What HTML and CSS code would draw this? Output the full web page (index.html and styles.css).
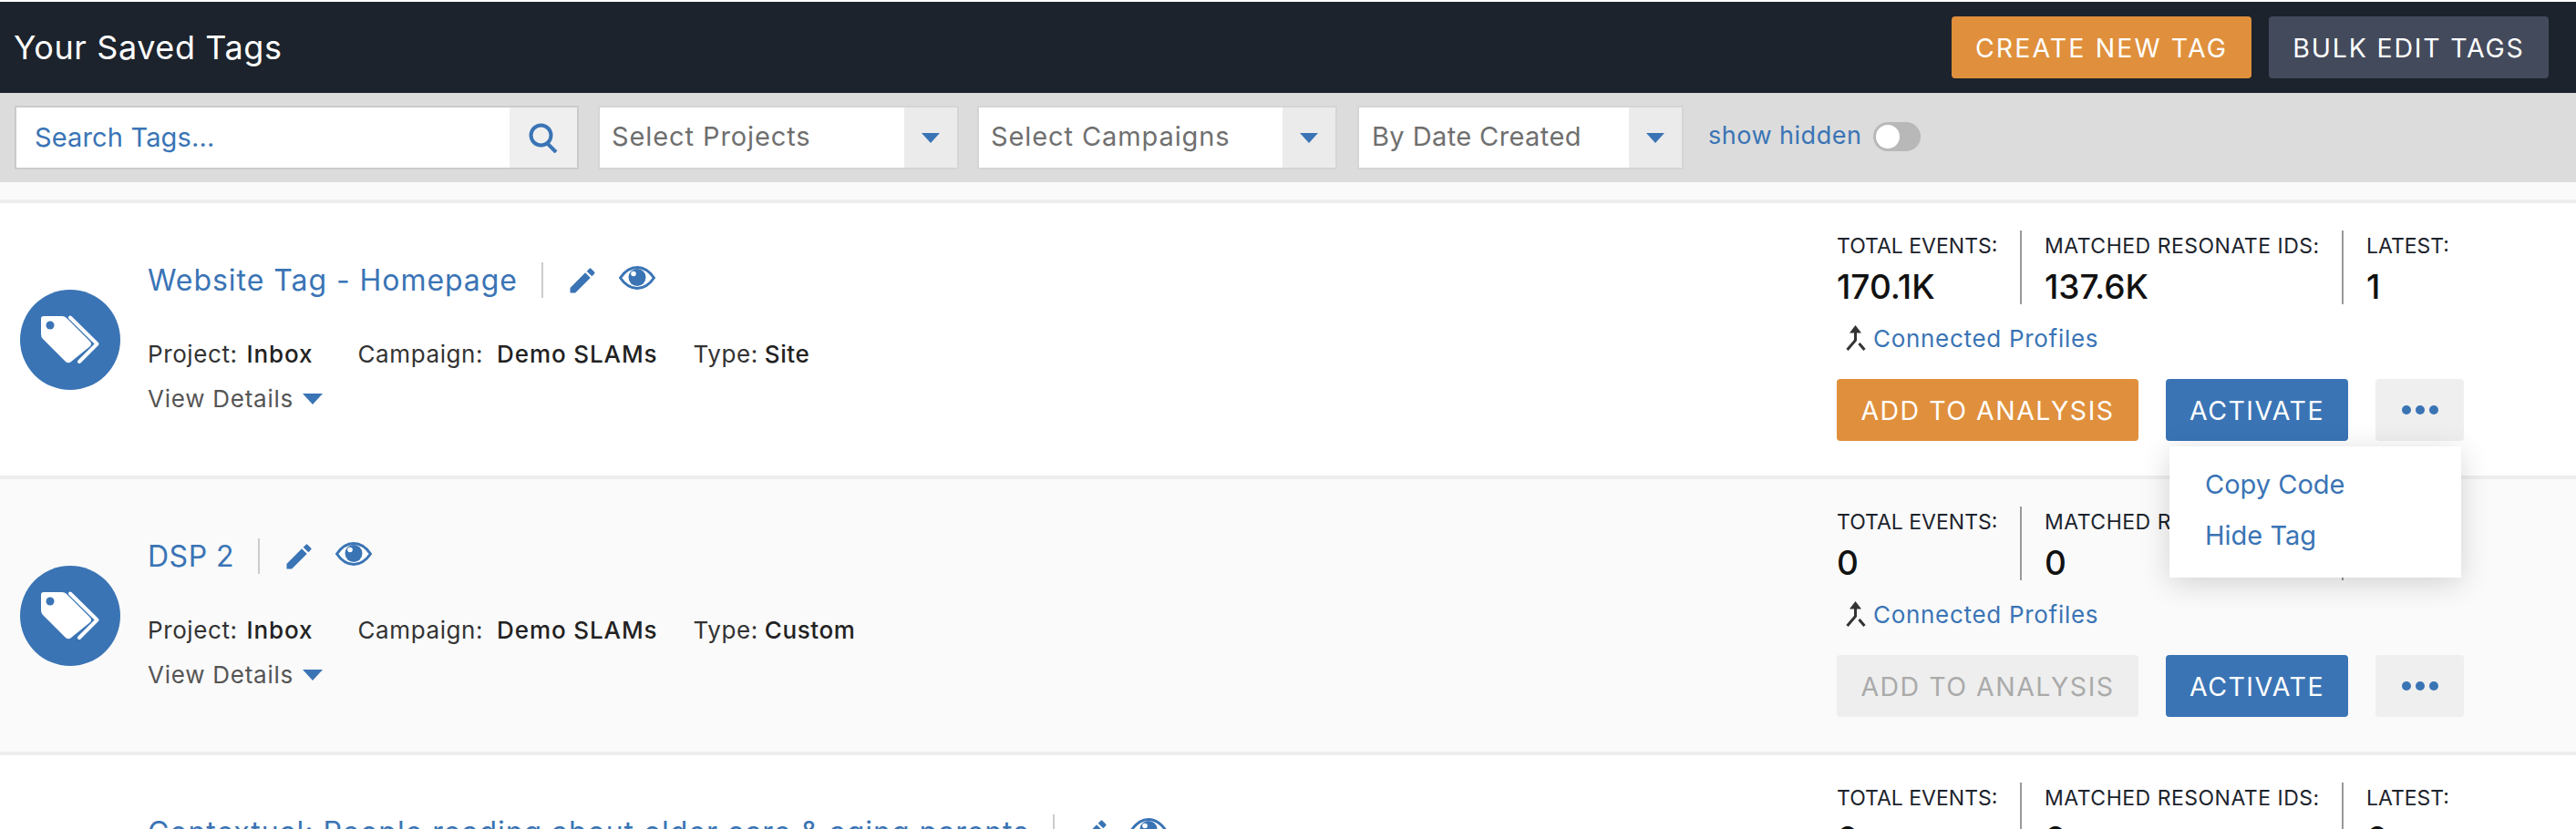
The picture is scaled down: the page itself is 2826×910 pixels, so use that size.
FILE: index.html
```html
<!DOCTYPE html>
<html lang="en">
<head>
<meta charset="utf-8">
<title>Your Saved Tags</title>
<link rel="stylesheet" href="styles.css">
</head>
<body>
<svg class="defs" width="0" height="0" aria-hidden="true">
  <defs>
    <symbol id="i-tags" viewBox="0 0 110 110">
      <circle cx="55" cy="55" r="55" fill="#3a74b5"/>
      <path d="M26 29H46Q49 29 51 31L77 57Q79 59.500 77 62L56 79Q53 81.500 50 79L25 54Q23 52 23 49V32Q23 29 26 29Z" fill="#fff"/>
      <circle cx="33" cy="39" r="4.500" fill="#3a74b5"/>
      <polyline points="55,30.500 84.500,59.500 65,79" fill="none" stroke="#fff" stroke-width="4" stroke-linecap="round" stroke-linejoin="round"/>
    </symbol>
    <symbol id="i-pencil" viewBox="0 0 24 24">
      <path fill="#3a74b5" d="M3 17.250V21h3.750L17.810 9.940l-3.750-3.750L3 17.250zM20.710 7.040c.39-.39.39-1.020 0-1.410l-2.340-2.340c-.39-.39-1.020-.39-1.410 0l-1.830 1.830 3.750 3.750 1.830-1.830z"/>
    </symbol>
    <symbol id="i-eye" viewBox="0 0 40 26">
      <path d="M1.500 13C7 5 13 1.500 20 1.500S33 5 38.500 13C33 21 27 24.500 20 24.500S7 21 1.500 13Z" fill="#fff" stroke="#3a74b5" stroke-width="3"/>
      <circle cx="20" cy="12.500" r="9.500" fill="#3a74b5"/>
      <circle cx="16" cy="8.500" r="2.800" fill="#fff"/>
    </symbol>
    <symbol id="i-merge" viewBox="0 0 22 28">
      <path d="M10.500 0L4 8.500H17Z" fill="#333"/>
      <path d="M10.500 7V16.500L1.500 27M14.500 20L20.500 27" fill="none" stroke="#333" stroke-width="3"/>
    </symbol>
    <symbol id="i-search" viewBox="0 0 32 33">
      <circle cx="13.500" cy="13.500" r="11" fill="none" stroke="#3a74b5" stroke-width="4"/>
      <path d="M20 22L30 32" fill="none" stroke="#3a74b5" stroke-width="4"/>
    </symbol>
  </defs>
</svg>

<header class="topbar">
  <h1 class="topbar-title">Your Saved Tags</h1>
  <div class="topbar-actions">
    <button class="btn btn-orange btn-create">CREATE NEW TAG</button>
    <button class="btn btn-slate btn-bulk">BULK EDIT TAGS</button>
  </div>
</header>

<div class="filters">
  <div class="search">
    <span class="search-text">Search Tags...</span>
    <span class="search-btn"><svg class="icon-search"><use href="#i-search"/></svg></span>
  </div>
  <div class="select select-projects"><span class="select-text">Select Projects</span><span class="select-arrow"><i class="caret"></i></span></div>
  <div class="select select-campaigns"><span class="select-text">Select Campaigns</span><span class="select-arrow"><i class="caret"></i></span></div>
  <div class="select select-date"><span class="select-text">By Date Created</span><span class="select-arrow"><i class="caret"></i></span></div>
  <span class="show-hidden">show hidden</span>
  <span class="toggle"><i class="knob"></i></span>
</div>

<div class="strip"></div>

<main class="list">
  <article class="row">
    <svg class="tag-icon"><use href="#i-tags"/></svg>
    <div class="info">
      <div class="title-line">
        <a class="title">Website Tag - Homepage</a>
        <span class="title-sep"></span>
        <svg class="icon-pencil"><use href="#i-pencil"/></svg>
        <svg class="icon-eye"><use href="#i-eye"/></svg>
      </div>
      <div class="meta">
        <span class="meta-item meta-project">Project: <b>Inbox</b></span>
        <span class="meta-item meta-campaign">Campaign: <b>Demo SLAMs</b></span>
        <span class="meta-item meta-type">Type: <b>Site</b></span>
      </div>
      <div class="details">View Details <i class="caret caret-details"></i></div>
    </div>
    <div class="side">
      <div class="stats">
        <div class="stat stat-total"><div class="stat-label">TOTAL EVENTS:</div><div class="stat-value">170.1K</div></div>
        <div class="stat stat-matched"><div class="stat-label">MATCHED RESONATE IDS:</div><div class="stat-value">137.6K</div></div>
        <div class="stat stat-latest"><div class="stat-label">LATEST:</div><div class="stat-value">1</div></div>
      </div>
      <div class="connected"><svg class="icon-merge"><use href="#i-merge"/></svg><a class="connected-link">Connected Profiles</a></div>
      <div class="actions">
        <button class="btn btn-orange btn-add">ADD TO ANALYSIS</button>
        <button class="btn btn-blue btn-activate">ACTIVATE</button>
        <div class="more-wrap">
          <button class="btn btn-more" aria-label="More"><i class="dot"></i><i class="dot"></i><i class="dot"></i></button>
          <div class="menu">
            <a class="menu-item">Copy Code</a>
            <a class="menu-item">Hide Tag</a>
          </div>
        </div>
      </div>
    </div>
  </article>

  <article class="row row-alt">
    <svg class="tag-icon"><use href="#i-tags"/></svg>
    <div class="info">
      <div class="title-line">
        <a class="title title-short">DSP 2</a>
        <span class="title-sep"></span>
        <svg class="icon-pencil"><use href="#i-pencil"/></svg>
        <svg class="icon-eye"><use href="#i-eye"/></svg>
      </div>
      <div class="meta">
        <span class="meta-item meta-project">Project: <b>Inbox</b></span>
        <span class="meta-item meta-campaign">Campaign: <b>Demo SLAMs</b></span>
        <span class="meta-item meta-type">Type: <b>Custom</b></span>
      </div>
      <div class="details">View Details <i class="caret caret-details"></i></div>
    </div>
    <div class="side">
      <div class="stats">
        <div class="stat stat-total"><div class="stat-label">TOTAL EVENTS:</div><div class="stat-value">0</div></div>
        <div class="stat stat-matched"><div class="stat-label">MATCHED RESONATE IDS:</div><div class="stat-value">0</div></div>
        <div class="stat stat-latest"><div class="stat-label">LATEST:</div><div class="stat-value">0</div></div>
      </div>
      <div class="connected"><svg class="icon-merge"><use href="#i-merge"/></svg><a class="connected-link">Connected Profiles</a></div>
      <div class="actions">
        <button class="btn btn-disabled btn-add">ADD TO ANALYSIS</button>
        <button class="btn btn-blue btn-activate">ACTIVATE</button>
        <div class="more-wrap"><button class="btn btn-more" aria-label="More"><i class="dot"></i><i class="dot"></i><i class="dot"></i></button></div>
      </div>
    </div>
  </article>

  <article class="row">
    <svg class="tag-icon"><use href="#i-tags"/></svg>
    <div class="info">
      <div class="title-line">
        <a class="title">Contextual: People reading about older care &amp; aging parents</a>
        <span class="title-sep"></span>
        <svg class="icon-pencil"><use href="#i-pencil"/></svg>
        <svg class="icon-eye"><use href="#i-eye"/></svg>
      </div>
    </div>
    <div class="side">
      <div class="stats">
        <div class="stat stat-total"><div class="stat-label">TOTAL EVENTS:</div><div class="stat-value">0</div></div>
        <div class="stat stat-matched"><div class="stat-label">MATCHED RESONATE IDS:</div><div class="stat-value">0</div></div>
        <div class="stat stat-latest"><div class="stat-label">LATEST:</div><div class="stat-value">0</div></div>
      </div>
    </div>
  </article>
</main>
</body>
</html>
```

FILE: styles.css
```css
* { box-sizing: border-box; }
html, body { margin: 0; padding: 0; height: 910px; overflow: hidden; background: #fff; }
body { padding-top: 2px; font-family: Inter, "Liberation Sans", sans-serif; color: #333; }
.defs { position: absolute; }
a { display: block; }
i { display: block; }

.topbar { height: 100px; background: #1c232c; display: flex; align-items: center; justify-content: space-between; padding: 0 30px 0 15px; }
.topbar-title { margin: 0; font-size: 36px; font-weight: 400; color: #fff; letter-spacing: 0.6px; }
.topbar-actions { display: flex; gap: 19px; }

.btn { border: 0; border-radius: 4px; height: 68px; padding: 0; font-family: inherit; font-size: 28.5px; font-weight: 400; letter-spacing: 1.5px; color: #fff; display: flex; align-items: center; justify-content: center; }
.btn-orange { background: #e0903c; }
.btn-slate { background: #434a5c; }
.btn-blue { background: #3a74b5; }
.btn-disabled { background: #eee; color: #aaa; }
.btn-create { width: 329px; letter-spacing: 2.1px; }
.btn-bulk { width: 307px; letter-spacing: 1.8px; }
.btn-add { width: 331px; }
.btn-activate { width: 200px; }
.btn-more { width: 97px; background: #efefef; gap: 5px; }
.dot { width: 10px; height: 10px; border-radius: 50%; background: #3a74b5; }

.filters { height: 98px; background: #dcdcdc; display: flex; align-items: center; padding: 0 16px; }
.search { width: 619px; height: 70px; background: #fff; border: 2px solid #cbcbcb; display: flex; align-items: stretch; justify-content: space-between; }
.search-text { font-size: 29px; letter-spacing: 0.15px; color: #3a74b5; padding-left: 20px; line-height: 66px; }
.search-btn { width: 74px; background: #efefef; display: flex; align-items: center; justify-content: center; }
.icon-search { width: 32px; height: 33px; }
.select { height: 70px; background: #fff; border: 2px solid #d5d5d5; display: flex; justify-content: space-between; align-items: stretch; }
.select-projects { width: 396px; margin-left: 21px; }
.select-campaigns { width: 395px; margin-left: 20px; }
.select-date { width: 358px; margin-left: 22px; }
.select-text { font-size: 29px; letter-spacing: 0.9px; color: #6f6f6f; padding-left: 13px; line-height: 64px; }
.select-date .select-text { letter-spacing: 0.4px; padding-left: 14px; }
.select-arrow { width: 58px; background: #ebebeb; display: flex; align-items: center; justify-content: center; }
.caret { width: 0; height: 0; border-left: 10px solid transparent; border-right: 10px solid transparent; border-top: 11px solid #3a74b5; }
.caret-details { border-left-width: 11px; border-right-width: 11px; border-top-width: 12px; }
.show-hidden { margin-left: 27px; margin-bottom: 6px; font-size: 27px; letter-spacing: 0.5px; color: #3a74b5; }
.toggle { margin-left: 13px; margin-bottom: 2px; width: 52px; height: 32px; border-radius: 16px; background: #b8b8b8; padding: 3px; }
.knob { width: 26px; height: 26px; border-radius: 50%; background: #fff; }

.strip { height: 23px; background: #fafafa; border-bottom: 4px solid #eee; }

.row { height: 303px; display: flex; align-items: flex-start; background: #fff; border-bottom: 4px solid #eee; padding-left: 22px; }
.row-alt { background: #fafafa; }
.tag-icon { width: 110px; height: 110px; margin-top: 95px; flex: none; }
.info { margin-left: 30px; padding-top: 65px; }
.title-line { height: 39px; display: flex; align-items: center; }
.title { font-size: 32px; color: #3a74b5; letter-spacing: 0.95px; white-space: nowrap; }
.title-short { letter-spacing: 0.5px; }
.title-sep { width: 2px; height: 39px; background: #ccc; margin-left: 26px; }
.icon-pencil { width: 36px; height: 36px; margin-left: 25px; }
.icon-eye { width: 40px; height: 26px; margin-left: 22px; margin-top: -5px; }
.meta { margin-top: 47px; display: flex; gap: 39px; height: 30px; line-height: 30px; font-size: 26px; letter-spacing: 0.6px; color: #333; }
.meta-project { margin-right: 10px; }
.meta b { font-weight: 500; color: #222; margin-left: 2px; letter-spacing: 0.9px; }
.meta-campaign b { margin-left: 7px; }
.meta-type b { margin-left: -1px; letter-spacing: 0.6px; }
.details { margin-top: 19px; height: 30px; line-height: 30px; font-size: 26px; letter-spacing: 0.75px; color: #555; display: flex; align-items: center; gap: 10px; }

.side { margin-left: auto; flex: none; width: 811px; padding-top: 30px; }
.stats { display: flex; height: 81px; }
.stat { padding-top: 5px; }
.stat-total { width: 203px; border-right: 2px solid #999; }
.stat-matched { width: 353px; padding-left: 25px; border-right: 2px solid #999; }
.stat-latest { padding-left: 25px; }
.stat-label { font-size: 23px; line-height: 24px; color: #1c232c; white-space: nowrap; }
.stat-matched .stat-label { letter-spacing: 0.5px; }
.stat-value { margin-top: 13px; font-size: 37px; line-height: 40px; font-weight: 500; color: #111; }
.connected { margin-top: 22px; margin-left: 10px; height: 30px; display: flex; align-items: center; gap: 8px; }
.icon-merge { width: 22px; height: 28px; }
.connected-link { font-size: 26px; letter-spacing: 0.7px; color: #3a74b5; }
.actions { margin-top: 30px; display: flex; gap: 30px; }
.more-wrap { position: relative; }
.menu { position: absolute; z-index: 5; top: 74px; right: 3px; width: 320px; height: 144px; background: #fff; box-shadow: 0 6px 30px rgba(0, 0, 0, 0.16); padding: 14px 0 0 39px; }
.menu-item { height: 56px; line-height: 56px; font-size: 29px; color: #3a74b5; }
```
